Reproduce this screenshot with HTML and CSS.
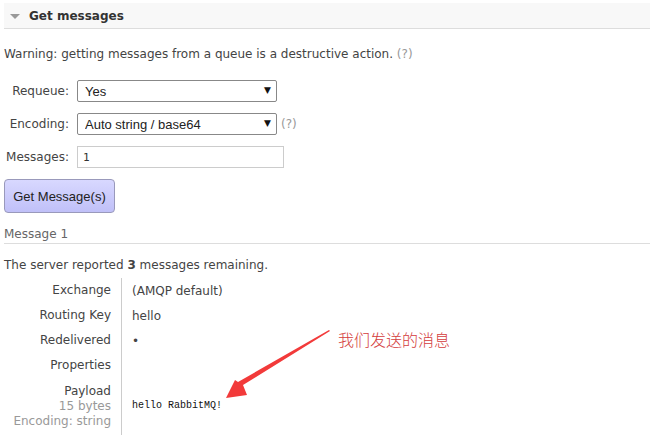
FILE: index.html
```html
<html>
    <head>
        <link rel="stylesheet" href="styles.css">
    </head>
    <body>
    <div class="section">
        <h2 class="section-head"><span class="tri"></span>Get messages</h2>
        <div class="section-body">
            <p class="warn">Warning: getting messages from a queue is a destructive action. <span class="help">(?)</span></p>

            <div class="form">
                <label>Requeue:</label>
                <span class="select"><select><option>Yes</option><option>No</option></select></span>
                <span></span>

                <label>Encoding:</label>
                <span class="select"><select><option>Auto string / base64</option><option>base64</option></select></span>
                <span class="help">(?)</span>

                <label>Messages:</label>
                <input type="text" class="txt" value="1">
                <span></span>
            </div>

            <button class="btn">Get Message(s)</button>

            <h3 class="msg-head">Message 1</h3>
            <p class="remain">The server reported <b>3</b> messages remaining.</p>

            <table class="facts">
                <tr><th>Exchange</th><td>(AMQP default)</td></tr>
                <tr><th>Routing Key</th><td>hello</td></tr>
                <tr><th>Redelivered</th><td>&bull;</td></tr>
                <tr><th>Properties</th><td></td></tr>
                <tr class="payload">
                    <th>Payload<br><sub>15 bytes</sub><br><sub>Encoding: string</sub></th>
                    <td><pre>hello RabbitMQ!</pre></td>
                </tr>
            </table>
        </div>
    </div>

    <svg class="arrow" width="650" height="435" viewBox="0 0 650 435">
        <polygon points="330,331 243,385 247,395 226,398 235,380 238,382 329,330" fill="#f23a3a"/>
    </svg>
    <div class="note">我们发送的消息</div>
    </body>
</html>
```

FILE: styles.css
```css
body {
    margin: 0;
    padding: 3px 0 0 4px;
    font-family: "DejaVu Sans", sans-serif;
    font-size: 12px;
    color: #444;
    position: relative;
    height: 432px;
    overflow: hidden;
}
.section-head {
    margin: 0;
    height: 25px;
    background-color: #f8f8f8;
    border-bottom: 1px solid #ddd;
    display: flex;
    align-items: center;
    font-size: 12px;
    font-weight: bold;
    color: #333;
}
.tri {
    width: 0;
    height: 0;
    border-left: 5px solid transparent;
    border-right: 5px solid transparent;
    border-top: 5px solid #999;
    margin: 1px 9px 0 6px;
}
.warn {
    margin: 17px 0 0 0;
    line-height: 16px;
}
.help {
    color: #999;
}
.form {
    display: grid;
    grid-template-columns: 65px auto 1fr;
    column-gap: 8px;
    row-gap: 11px;
    align-items: center;
    margin-top: 18px;
}
.form label {
    text-align: right;
    font-size: 12px;
}
.select {
    position: relative;
    display: block;
    width: 200px;
}
.select select {
    appearance: none;
    -webkit-appearance: none;
    width: 200px;
    height: 22px;
    border: 1px solid #888;
    border-radius: 2px;
    background: #fff;
    font-family: "Liberation Sans", sans-serif;
    font-size: 13px;
    color: #222;
    padding: 0 0 0 7px;
}
.select::after {
    content: "\25BC";
    position: absolute;
    right: 6px;
    top: 5px;
    font-size: 9px;
    color: #111;
    pointer-events: none;
}
.form .help {
    margin-left: -11px;
}
.txt {
    width: 207px;
    height: 22px;
    border: 1px solid #ccc;
    padding: 0 0 0 5px;
    box-sizing: border-box;
    font-family: "DejaVu Sans Mono", monospace;
    font-size: 11px;
    color: #333;
}
.btn {
    display: block;
    margin-top: 11px;
    width: 111px;
    height: 34px;
    border: 1px solid #99b;
    border-radius: 4px;
    background: linear-gradient(#d8d8ff, #c0c0f8);
    font-family: "Liberation Sans", sans-serif;
    font-size: 13px;
    color: #222;
}
.msg-head {
    margin: 13px 0 0 0;
    padding-bottom: 1px;
    border-bottom: 1px solid #ddd;
    font-size: 12px;
    font-weight: normal;
    color: #666;
    line-height: 16px;
}
.remain {
    margin: 13px 0 0 0;
    line-height: 16px;
}
.facts {
    border-collapse: collapse;
    margin-top: 5px;
    font-size: 12px;
    color: #444;
}
.facts th {
    width: 107px;
    text-align: right;
    font-weight: normal;
    padding: 0 10px 0 0;
    height: 25px;
    border-right: 1px solid #ccc;
    line-height: 15px;
}
.facts td {
    padding: 0 0 0 10px;
}
.payload th {
    padding-top: 6px;
    padding-bottom: 8px;
}
.payload td {
    padding-bottom: 5px;
}
.facts sub {
    font-size: 12px;
    vertical-align: baseline;
    color: #999;
}
.facts pre {
    margin: 0;
    font-family: "Liberation Mono", monospace;
    font-size: 10px;
    color: #111;
}
.arrow {
    position: absolute;
    left: 0;
    top: 0;
}
.note {
    position: absolute;
    left: 338px;
    top: 327px;
    font-family: "Noto Sans CJK SC", sans-serif;
    font-size: 16px;
    font-weight: 300;
    color: #d43c3c;
}
```
